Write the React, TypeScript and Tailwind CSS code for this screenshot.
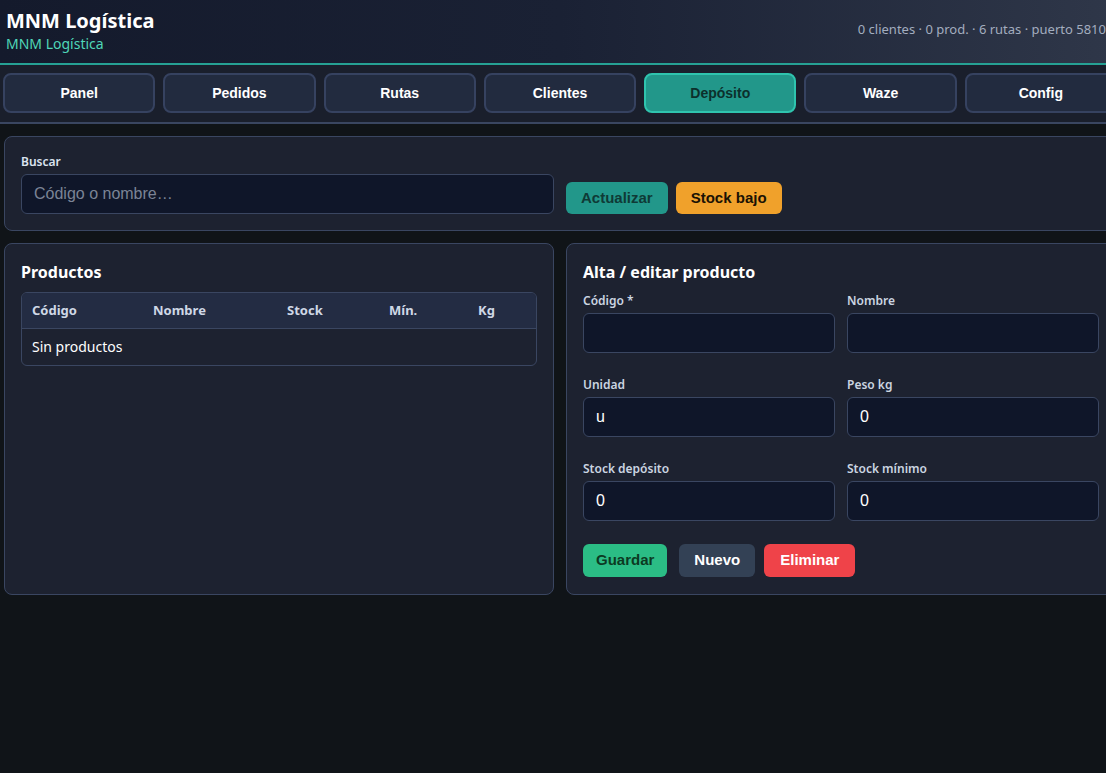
import React, { useState } from "react";

const tabs = ["Panel", "Pedidos", "Rutas", "Clientes", "Depósito", "Waze", "Config"];

const inputCls =
  "w-full h-10 px-3 rounded-md bg-[#0f1629] border border-[#3a4661] text-white text-base outline-none font-['Liberation_Sans',Arial,sans-serif]";

interface IFieldProps {
  label: string;
  value: string;
  onChange: (v: string) => void;
}

const Field: React.FC<IFieldProps> = ({ label, value, onChange }) => (
  <div className="flex flex-col">
    <label className="text-xs font-semibold text-[#cbd5e1] mb-[4px]">{label}</label>
    <input className={inputCls} value={value} onChange={(e) => onChange(e.currentTarget.value)} />
  </div>
);

const App: React.FC = () => {
  const [tab, setTab] = useState<string>("Depósito");
  const [search, setSearch] = useState<string>("");
  const [form, setForm] = useState({
    codigo: "",
    nombre: "",
    unidad: "u",
    peso: "0",
    stock: "0",
    minimo: "0",
  });

  const set = (k: keyof typeof form) => (v: string) => setForm({ ...form, [k]: v });

  return (
    <div className="w-full min-h-[773px] overflow-hidden bg-[#101418] font-['Noto_Sans',sans-serif]">
      <div className="w-[1120px]">
        {/* header */}
        <header className="h-[65px] flex items-center justify-between pl-[6px] pr-[14px] bg-gradient-to-r from-[#141a2c] via-[#1a2134] to-[#2f3749] border-b-2 border-[#26a194]">
          <div className="flex flex-col -mt-[1px]">
            <h1 className="text-[20px] font-bold text-white leading-6">MNM Logística</h1>
            <span className="text-sm text-[#4fd6b8] leading-5 mt-[1px]">MNM Logística</span>
          </div>
          <span className="text-[13px] text-[#a3adbf] -mt-[3px]">
            0 clientes · 0 prod. · 6 rutas · puerto 5810
          </span>
        </header>

        {/* nav */}
        <nav className="flex gap-2 px-[3px] pt-[8px] pb-[9px] bg-[#1a1f2c] border-b-2 border-[#3a4661]">
          {tabs.map((t) => (
            <button
              key={t}
              onClick={() => setTab(t)}
              className={
                t === tab
                  ? "flex-1 h-10 rounded-lg border-2 border-[#2fc4ae] bg-[#22978a] text-[#0c302c] text-sm font-bold font-['Liberation_Sans',Arial,sans-serif]"
                  : "flex-1 h-10 rounded-lg border-2 border-[#364260] bg-[#222b3f] text-white text-sm font-bold font-['Liberation_Sans',Arial,sans-serif]"
              }
            >
              {t}
            </button>
          ))}
        </nav>

        <main className="px-[4px] pt-[12px] flex flex-col gap-3">
          {/* search */}
          <section className="rounded-lg border border-[#3a4661] bg-[#1d2230] px-4 pt-[17px] pb-4 flex items-end">
            <div className="flex flex-col w-[533px]">
              <label className="text-xs font-semibold text-[#dbe4f0] mb-[4px]">Buscar</label>
              <input
                className="w-full h-[40px] px-3 rounded-md bg-[#0f1629] border border-[#3a4661] text-white text-base outline-none placeholder:text-[#7b8496] font-['Liberation_Sans',Arial,sans-serif]"
                placeholder="Código o nombre…"
                value={search}
                onChange={(e) => setSearch(e.currentTarget.value)}
              />
            </div>
            <button className="ml-3 h-[32px] px-[15px] rounded-md bg-[#22978a] text-[#0f3a36] text-[15px] font-bold font-['Liberation_Sans',Arial,sans-serif]">
              Actualizar
            </button>
            <button className="ml-2 h-[32px] px-[15px] rounded-md bg-[#f0a12b] text-[#1a1204] text-[15px] font-bold font-['Liberation_Sans',Arial,sans-serif]">
              Stock bajo
            </button>
          </section>

          <div className="grid grid-cols-2 gap-3">
            {/* productos */}
            <section className="rounded-lg border border-[#3a4661] bg-[#1d2230] px-4 pt-[16px] pb-4">
              <h2 className="text-base font-bold text-white mb-[8px]">Productos</h2>
              <div className="rounded-md border border-[#3a4661] overflow-hidden">
                <table className="w-full text-left">
                  <thead className="bg-[#232c43]">
                    <tr className="text-[13px] font-bold text-[#cfd8e6]">
                      <th className="h-[35px] pl-[10px] w-[131px] font-bold">Código</th>
                      <th className="w-[134px] font-bold">Nombre</th>
                      <th className="w-[102px] font-bold">Stock</th>
                      <th className="w-[89px] font-bold">Mín.</th>
                      <th className="font-bold">Kg</th>
                    </tr>
                  </thead>
                  <tbody>
                    <tr className="border-t border-[#3a4661]">
                      <td colSpan={5} className="h-[37px] pl-[10px] text-sm text-white">
                        Sin productos
                      </td>
                    </tr>
                  </tbody>
                </table>
              </div>
            </section>

            {/* form */}
            <section className="rounded-lg border border-[#3a4661] bg-[#1d2230] px-4 pt-[16px] pb-[17px]">
              <h2 className="text-base font-bold text-white mb-[9px]">Alta / editar producto</h2>
              <div className="grid grid-cols-2 gap-x-3 gap-y-[24px]">
                <Field label="Código *" value={form.codigo} onChange={set("codigo")} />
                <Field label="Nombre" value={form.nombre} onChange={set("nombre")} />
                <Field label="Unidad" value={form.unidad} onChange={set("unidad")} />
                <Field label="Peso kg" value={form.peso} onChange={set("peso")} />
                <Field label="Stock depósito" value={form.stock} onChange={set("stock")} />
                <Field label="Stock mínimo" value={form.minimo} onChange={set("minimo")} />
              </div>
              <div className="flex mt-[23px]">
                <button className="mr-[12px] h-[33px] px-[13px] rounded-md bg-[#2bbd85] text-[#0c3a22] text-[15px] font-bold font-['Liberation_Sans',Arial,sans-serif]">
                  Guardar
                </button>
                <button className="mr-[9px] h-[33px] px-[15px] rounded-md bg-[#334155] text-white text-[15px] font-bold font-['Liberation_Sans',Arial,sans-serif]">
                  Nuevo
                </button>
                <button className="h-[33px] px-[16px] rounded-md bg-[#ef4349] text-white text-[15px] font-bold font-['Liberation_Sans',Arial,sans-serif]">
                  Eliminar
                </button>
              </div>
            </section>
          </div>
        </main>
      </div>
    </div>
  );
};

export default App;
